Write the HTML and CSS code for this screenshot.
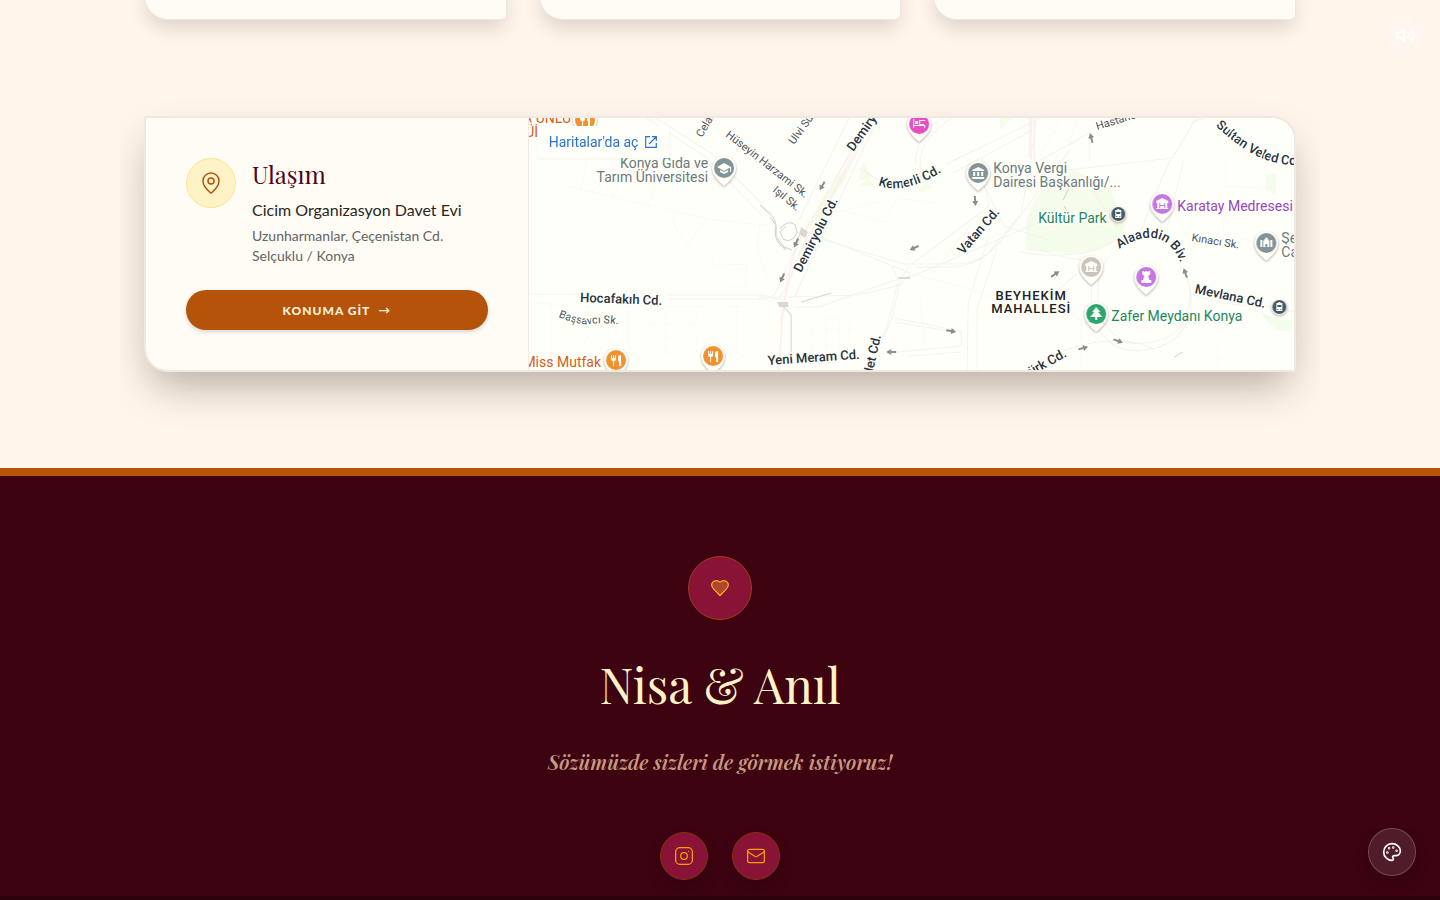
FILE: index.html
```
<!DOCTYPE html>
<html lang="tr">
<head>
    <meta charset="UTF-8">
    <meta name="viewport" content="width=device-width, initial-scale=1.0">
    <title>Nisa &amp; Anıl</title>
    <link rel="stylesheet" href="styles.css">
</head>
<body>
    <button class="sound-btn" type="button" aria-label="Müzik">
        <svg viewBox="0 0 24 24" width="20" height="20" class="icon">
            <path d="M11 5 6 9H2v6h4l5 4z"/>
            <path d="M15.54 8.46a5 5 0 0 1 0 7.07M19.07 4.93a10 10 0 0 1 0 14.14"/>
        </svg>
    </button>

    <main>
        <div class="cards">
            <div class="card"></div>
            <div class="card"></div>
            <div class="card"></div>
        </div>

        <section class="location">
            <div class="location-info">
                <div class="location-head">
                    <div class="pin-icon">
                        <svg viewBox="0 0 24 24" width="24" height="24" class="icon thin">
                            <path d="M20 10c0 5-5.540 10.190-7.400 11.800a1 1 0 0 1-1.200 0C9.540 20.190 4 15 4 10a8 8 0 0 1 16 0"/>
                            <circle cx="12" cy="10" r="3"/>
                        </svg>
                    </div>
                    <div>
                        <h3>Ulaşım</h3>
                        <p class="venue">Cicim Organizasyon Davet Evi</p>
                        <p class="address">Uzunharmanlar, Çeçenistan Cd.<br>Selçuklu / Konya</p>
                    </div>
                </div>
                <a class="location-btn" href="#konum">KONUMA GİT <span class="btn-arrow">→</span></a>
            </div>

            <div class="map">
                <svg class="map-canvas" viewBox="0 0 765 252" preserveAspectRatio="xMidYMid slice" role="img" aria-label="Konya haritası">
                    <defs>
                        <path id="pin" d="M0 18C-3 15-12 9-12 0a12 12 0 0 1 24 0c0 9-9 15-12 18z"/>
                        <path id="arrow" d="M-5-1H0V-3L5 0 0 3V1H-5z"/>
                        <path id="fork" d="M-5-5v4q0 2 2 2v5h1V1q2 0 2-2v-4h-1v3h-1v-3h-1v3h-1v-3zM2-4v5h1v5h2V-5q-2 0-3 1z"/>
                        <path id="museum" fill-rule="evenodd" d="M-6-3 0-6 6-3v2H5v5h1v1H-6V4h1v-5h-1zM-3-1v5h1V2h4v2h1v-5H2v2h-4v-2z"/>
                        <path id="p-kemerli" d="M349 67Q374 78 414 53"/>
                        <path id="p-alaaddin" d="M590 131Q626 107 646 134L652 146"/>
                        <path id="p-sultan" d="M686 8Q716 35 737 42T775 46"/>
                        <path id="p-bassavci" d="M29 199Q52 208 62 206T94 207"/>
                    </defs>

                    <g class="park">
                        <path d="M497 104Q503 80 523 62L543 52Q566 60 578 66L597 105 590 122Q568 133 545 136L497 132z"/>
                        <path d="M276 111 311 56 323 45 316 62 284 108zM334 45l7 10v7h-12zM330 67l10-6 5 8zM389 71l7-6 8 4-12 6zM471 0h12l-8 8-5 3zM736 56h11l-1 20-10-4zM730 193l18 8 14 1v11h-10q-12-4-22-20z"/>
                    </g>

                    <g class="road faint">
                        <path d="M38 68 80 78 145 93 180 101 245 108M58 42l-7 33M83 50 66 72M98 42 82 84M133 45l-15 48M144 98q2 18 15 28l20-27M183 139v9l34-2v23h-22M0 188h240M0 184l22 2v49M59 188v29l-5 14M98 188l2 45M119 194h48v12h-48zM120 220h48v14h-40M137 194v42M207 188v46l22 14M231 105l-3 25 10 30"/>
                        <path d="M282 200h28v45h-28zM297 200v45M282 212h45M282 228h40M320 204v40M285 100l70-18M300 90l60 15M355 102l13-22 40 5M376 154l65 17 50 20M440 108l-38 50M391 180l5 50"/>
                        <path d="M500 55l30-50M520 10l30 20M548 0l-12 40M640 86h50l8 20M660 90v40M690 68l5 50M696 40v28l50 3M695 118l50 8M600 225l30 27M552 252v-50l-30-18M660 180l-10 40M640 205h80M655 240h90M688 225v27M500 104l90 20M520 68l60 56M543 54l12 80M506 120 576 72M498 90l54 44"/>
                    </g>
                    <g class="road">
                        <path d="M0 176h52M138 177h95l20 5M140 181h97l9-5 28-63M117 0l58 38 57 58M127 0l56 36 60 60"/>
                        <path d="M320 0 265 112M343 0 302 77 250 182M347 4 328 44 265 180M229 179h30l70-2 42-10 10-12-102-41M265 189h25L372 160l14-3 120-51M330 50l22 14M417 46 512 0M424 55 500 14V0M391 60V42Q392 22 422 0M386 46q1-30 28-46"/>
                        <path d="M285 119l90 27h53q25-1 43-22l70-92M363 148l6 15-10 42-20 47M380 148l-8 12-10 43-23 49M387 149h33q31-1 44-20L492 96 505 18 507 0M448 40l12 48-77 58M453 40l2 28 20 40 44 14M459 120l-20 65-1 67M468 130l-20 60v62M365 200l67 13v15l-116 11M366 204l66 11M380 238l52-4"/>
                        <path d="M491 134q25 5 55 2 20 0 45-17M510 132l28 8 18 2M502 0v45M506 45 560 15M540 52q40-5 103-12L667 0M560 43V10M641 42l-10 22-20 50M654 43l-20 84M662 5 674 0"/>
                        <path d="M580 137q-20 30-5 67 15 25 40 21 38-3 44-35 6-22-8-43M570 142q-15 30-2 67 15 27 46 23 37-3 47-37 3-20-4-38M532 234q25-10 47-11 26-2 45 8M660 175q40 15 80 13l25 6M520 180l28-25"/>
                    </g>
                    <path class="rail" d="M322 34Q292 86 273 118T250 252M328 34 278 120Q255 164 252 205M502 0l-2 39M505 0v42M558 60l16 30 15 19"/>
                    <path class="lane" d="M231 87l13 12q4 6 2 13-1 12 11 20M241 99l6 8v12l8 10 8 3M251 111q8-10 15-4l2 7q-5 12-14 7l-3-7 6-6M273 112l-8 15M272 184l30-9M253 187l9 10v39M534 82l6-13M535 88l4 7M645 239l8-5"/>
                    <path class="station" d="M272 109l7 5-3 6-6-4zM248 184h11v5h-9zM369 159h12v2h-12z"/>
                    <g class="arrows">
                        <use href="#arrow" transform="translate(293 68) rotate(120)"/>
                        <use href="#arrow" transform="translate(267 125) rotate(115)"/>
                        <use href="#arrow" transform="translate(253 160) rotate(115)"/>
                        <use href="#arrow" transform="translate(446 83) rotate(85)"/>
                        <use href="#arrow" transform="translate(385 130) rotate(155)"/>
                        <use href="#arrow" transform="translate(422 213) rotate(10)"/>
                        <use href="#arrow" transform="translate(362 234) rotate(180)"/>
                        <use href="#arrow" transform="translate(562 20) rotate(-105)"/>
                        <use href="#arrow" transform="translate(526 156) rotate(-35)"/>
                        <use href="#arrow" transform="translate(656 155) rotate(-110)"/>
                        <use href="#arrow" transform="translate(589 223) rotate(20)"/>
                        <use href="#arrow" transform="translate(554 230) rotate(-15)"/>
                    </g>

                    <g class="street">
                        <text transform="translate(51 184) rotate(2)">Hocafakıh Cd.</text>
                        <text transform="translate(324 34) rotate(-54)">Demiry</text>
                        <text transform="translate(272 155) rotate(-63)">Demiryolu Cd.</text>
                        <text transform="translate(434 137) rotate(-49)">Vatan Cd.</text>
                        <text transform="translate(239 247) rotate(-4)">Yeni Meram Cd.</text>
                        <text transform="translate(344 254) rotate(-78)">let Cd.</text>
                        <text transform="translate(665 175) rotate(12)">Mevlana Cd.</text>
                        <text transform="translate(502 258) rotate(-29)">ürk Cd.</text>
                        <text><textPath href="#p-kemerli">Kemerli Cd.</textPath></text>
                        <text><textPath href="#p-alaaddin">Alaaddin Blv.</textPath></text>
                        <text><textPath href="#p-sultan">Sultan Veled Cd.</textPath></text>
                    </g>
                    <g class="street small">
                        <text transform="translate(173 20) rotate(-60)">Celal</text>
                        <text transform="translate(265 27) rotate(-54)">Ulvi Sultan</text>
                        <text transform="translate(196 18) rotate(38)">Hüseyin Harzami Sk.</text>
                        <text transform="translate(243 73) rotate(40)">Işıl Sk.</text>
                        <text transform="translate(568 12) rotate(-17)">Hastane</text>
                        <text transform="translate(662 123) rotate(9)">Kınacı Sk.</text>
                        <text><textPath href="#p-bassavci">Başsavcı Sk.</textPath></text>
                    </g>
                    <g class="district">
                        <text x="502" y="182" text-anchor="middle">BEYHEKİM</text>
                        <text x="502" y="195" text-anchor="middle">MAHALLESİ</text>
                    </g>

                    <g class="place">
                        <text class="food" x="42" y="5" text-anchor="end">A ÜNLÜ</text>
                        <text class="food" x="9" y="19" text-anchor="end">Üİ</text>
                        <text class="food" x="72" y="249" text-anchor="end">Miss Mutfak</text>
                        <text class="public" x="179" y="50" text-anchor="end">Konya Gıda ve</text>
                        <text class="public" x="179" y="64" text-anchor="end">Tarım Üniversitesi</text>
                        <text class="public" x="464" y="55">Konya Vergi</text>
                        <text class="public" x="464" y="69">Dairesi Başkanlığı/...</text>
                        <text class="public" x="752" y="125">Şeyh</text>
                        <text class="public" x="752" y="139">Camii</text>
                        <text class="green" x="509" y="105">Kültür Park</text>
                        <text class="green" x="582" y="203">Zafer Meydanı Konya</text>
                        <text class="museum" x="648" y="93">Karatay Medresesi</text>
                    </g>

                    <g class="pins">
                        <g transform="translate(56 2)"><use href="#pin"/><circle r="10" fill="#f29130"/><use class="glyph" href="#fork"/></g>
                        <g transform="translate(87 242)"><use href="#pin"/><circle r="10" fill="#f29130"/><use class="glyph" href="#fork"/></g>
                        <g transform="translate(184 238)"><use href="#pin"/><circle r="10" fill="#f29130"/><use class="glyph" href="#fork"/></g>
                        <g transform="translate(195 50)"><use href="#pin"/><circle r="10" fill="#839496"/><path class="glyph" d="M-7-1 0-5 7-1 0 3zM-4 2 0 4 4 2v2L0 6-4 4zM6-1h1v5H6z"/></g>
                        <g transform="translate(390 6)"><use href="#pin"/><circle r="10" fill="#e84fc2"/><path class="glyph" fill-rule="evenodd" d="M-6-5h1V1H5v-4h1V4H5V2H-5v2h-1zM-4-3h3v3h-3zM0-4h6v5H0zM1-3v3h4v-3z"/></g>
                        <g transform="translate(449 55)"><use href="#pin"/><circle r="10" fill="#839496"/><path class="glyph" d="M-6-3 0-6 6-3v1H-6zM-5-1h2v4h-2zM-1-1h2v4h-2zM3-1h2v4H3zM-6 4H6v2H-6z"/></g>
                        <g transform="translate(633 86)"><use href="#pin"/><circle r="10" fill="#c575e5"/><use class="glyph" href="#museum"/></g>
                        <g transform="translate(562 149)"><use href="#pin"/><circle r="10" fill="#cbc4b9"/><use class="glyph" href="#museum"/></g>
                        <g transform="translate(617 159)"><use href="#pin"/><circle r="10" fill="#c575e5"/><path class="glyph" d="M-4-6h2v1h1v-1h2v1h1v-1h2v3L2-1 3 3H5v3H-5V3h2l1-4-2-2z"/></g>
                        <g transform="translate(567 196)"><use href="#pin"/><circle r="10" fill="#2ca56e"/><path class="glyph" d="M0-7 4-2H2l4 5H1v3h-2V3h-5l4-5h-2z"/></g>
                        <g transform="translate(737 125)"><use href="#pin"/><circle r="10" fill="#839496"/><path class="glyph" d="M-6-3h2v7h-2zM4-3h2v7H4zM-3 4v-6L0-6l3 4v6H1V1h-2v3z"/></g>
                        <g transform="translate(589 96)"><circle r="8"/><circle r="7" fill="#455a68"/><path class="glyph" fill-rule="evenodd" d="M-3-4h2v-1h2v1h2v8h-6zM-2-2v2h4v-2zM-2 2v1h1V2zM1 2v1h1V2z"/></g>
                        <g transform="translate(750 189)"><circle r="8"/><circle r="7" fill="#455a68"/><path class="glyph" fill-rule="evenodd" d="M-3-4h2v-1h2v1h2v8h-6zM-2-2v2h4v-2zM-2 2v1h1V2zM1 2v1h1V2z"/></g>
                    </g>
                </svg>
                <a class="map-link" href="#harita">Haritalar'da aç
                    <svg viewBox="0 0 12 12" width="12" height="12"><path d="M5 .7H.7v10.600h10.600V7M7 .7h4.300V5M11 1 4 8"/></svg>
                </a>
            </div>
        </section>
    </main>

    <footer class="footer">
        <div class="heart">
            <svg viewBox="0 0 24 24" width="20" height="20" class="icon">
                <path d="M19 14c1.490-1.460 3-3.210 3-5.500A5.500 5.500 0 0 0 16.500 3c-1.760 0-3 .5-4.500 2-1.500-1.500-2.740-2-4.500-2A5.500 5.500 0 0 0 2 8.500c0 2.300 1.500 4.050 3 5.500l7 7z"/>
            </svg>
        </div>
        <h2>Nisa &amp; Anıl</h2>
        <p class="tagline">Sözümüzde sizleri de görmek istiyoruz!</p>
        <div class="socials">
            <a href="#instagram" aria-label="Instagram">
                <svg viewBox="0 0 24 24" width="20" height="20" class="icon thin">
                    <rect x="2" y="2" width="20" height="20" rx="5"/>
                    <circle cx="12" cy="12" r="4"/>
                    <path d="M17.500 6.500h.01"/>
                </svg>
            </a>
            <a href="#mail" aria-label="E-posta">
                <svg viewBox="0 0 24 24" width="20" height="20" class="icon thin">
                    <rect x="2" y="4" width="20" height="16" rx="2"/>
                    <path d="m22 7-8.970 5.700a2 2 0 0 1-2.060 0L2 7"/>
                </svg>
            </a>
        </div>
        <div class="footer-bottom"></div>
    </footer>

    <button class="theme-btn" type="button" aria-label="Tema">
        <svg viewBox="0 0 24 24" width="20" height="20" class="icon">
            <path d="M12 2C6.500 2 2 6.500 2 12s4.500 10 10 10c.93 0 1.650-.75 1.650-1.690 0-.44-.18-.83-.44-1.120-.29-.29-.44-.65-.44-1.130a1.640 1.640 0 0 1 1.670-1.670h2c3.050 0 5.550-2.500 5.550-5.550C21.970 6.010 17.460 2 12 2z"/>
            <circle cx="13.500" cy="6.500" r=".5"/>
            <circle cx="17.500" cy="10.500" r=".5"/>
            <circle cx="8.500" cy="7.500" r=".5"/>
            <circle cx="6.500" cy="12.500" r=".5"/>
        </svg>
    </button>
</body>
</html>
```
FILE: styles.css
```
* {
    box-sizing: border-box;
}

body {
    font-family: Lato, sans-serif;
    background-color: #fff5eb;
    color: #292524;
    margin: 0;
    overflow-x: hidden;
}

h2,
h3,
p {
    margin: 0;
}

h2,
h3,
.tagline {
    font-family: "Playfair Display", "Liberation Serif", serif;
    font-weight: 400;
}

.icon {
    fill: none;
    stroke: currentColor;
    stroke-width: 2;
    stroke-linecap: round;
    stroke-linejoin: round;
}

.thin {
    stroke-width: 1.5;
}

main {
    max-width: 1200px;
    margin: 0 auto;
    padding: 0 24px 96px;
    overflow: hidden;
}

/* bottom edge of the cards above */
.cards {
    display: grid;
    grid-template-columns: repeat(3, 1fr);
    gap: 32px;
    margin-top: -20px;
    margin-bottom: 96px;
}

.card {
    height: 40px;
    background-color: #fffcf6;
    border: 1px solid #efe6df;
    border-top: none;
    border-radius: 0 0 6px 24px;
    box-shadow: 0 10px 20px -4px rgba(40, 30, 23, 0.18);
}

.location {
    display: grid;
    grid-template-columns: 1fr 2fr;
    background-color: #fffcf6;
    border: 2px solid #f0e8e3;
    border-radius: 2px 24px 2px 24px;
    box-shadow: 0 20px 40px -8px rgba(40, 30, 18, 0.35);
}

.location-info {
    display: flex;
    flex-direction: column;
    gap: 24px;
    padding: 40px;
    border-right: 1px solid #f0e8e3;
}

.location-head {
    display: flex;
    gap: 16px;
}

.pin-icon {
    display: flex;
    align-items: center;
    justify-content: center;
    flex-shrink: 0;
    width: 50px;
    height: 50px;
    border: 1px solid #fde68a;
    border-radius: 50%;
    background-color: #fef3c7;
    color: #b45309;
}

h3 {
    font-size: 24px;
    line-height: 32px;
    margin-bottom: 8px;
    color: #4c0519;
}

.venue {
    font-size: 16px;
    line-height: 24px;
    margin-bottom: 4px;
}

.address {
    font-size: 14px;
    line-height: 20px;
    color: #66625f;
}

.location-btn {
    display: flex;
    align-items: center;
    justify-content: center;
    gap: 8px;
    height: 40px;
    border-radius: 20px;
    background-color: #b45309;
    color: #fdf0dc;
    font-size: 12px;
    font-weight: 900;
    letter-spacing: 1px;
    text-decoration: none;
    box-shadow: 0 2px 4px rgba(0, 0, 0, 0.15);
}

.btn-arrow {
    font-family: "DejaVu Sans", sans-serif;
    font-size: 14px;
    font-weight: 400;
}

.map {
    position: relative;
    overflow: hidden;
    min-height: 252px;
    border-radius: 0 22px 0 0;
    background-color: #fffffa;
}

.map-canvas {
    position: absolute;
    inset: 0;
    width: 100%;
    height: 100%;
    font-family: Roboto, sans-serif;
}

.map-link {
    position: absolute;
    top: 8px;
    left: 9px;
    display: flex;
    align-items: center;
    gap: 7px;
    height: 32px;
    padding: 0 12px 0 11px;
    background-color: #fffffa;
    box-shadow: 0 1px 2px rgba(120, 90, 60, 0.08);
    color: #2b72cf;
    font-family: Roboto, sans-serif;
    font-size: 14px;
    text-decoration: none;
}

.map-link svg {
    fill: none;
    stroke: currentColor;
    stroke-width: 1.2;
}

.park {
    fill: #f4fde9;
}

.road,
.rail,
.lane {
    fill: none;
    stroke: #f4f3eb;
    stroke-width: 1;
}

.faint {
    stroke: #fcf9f1;
}

.rail {
    stroke: #fcf2e9;
    stroke-width: 2;
}

.lane {
    stroke: #d5d4ce;
}

.station {
    fill: #dcd7d1;
}

.arrows {
    fill: #8b8d8c;
}

.street text {
    fill: #283341;
    font-size: 13px;
    font-weight: 500;
    paint-order: stroke;
    stroke: #fffffa;
    stroke-width: 3;
}

.small text {
    fill: #4b535b;
    font-size: 11px;
    font-weight: 400;
}

.district text {
    font-size: 13px;
    font-weight: 500;
    fill: #202124;
    letter-spacing: 1px;
}

.place text {
    font-size: 14px;
    paint-order: stroke;
    stroke: #fffffa;
    stroke-width: 3;
}

.place .food {
    fill: #d2601a;
}

.place .public {
    fill: #6c7a7b;
}

.place .green {
    fill: #22875a;
}

.place .museum {
    fill: #9547c1;
}

.pins {
    fill: #fffffa;
    filter: drop-shadow(0 1px 1px rgba(70, 40, 20, 0.4));
}

.pins .glyph {
    fill: #fffffa;
}

.footer {
    display: flex;
    flex-direction: column;
    align-items: center;
    padding-top: 80px;
    border-top: 8px solid #b45309;
    background-color: #3d0311;
    text-align: center;
}

.heart {
    display: flex;
    align-items: center;
    justify-content: center;
    width: 64px;
    height: 64px;
    margin-bottom: 32px;
    border: 1px solid #a13c16;
    border-radius: 50%;
    background-color: #881337;
    color: #fbb024;
}

.heart .icon {
    fill: #b0462a;
    stroke-width: 1.5;
}

h2 {
    font-size: 48px;
    line-height: 64px;
    margin-bottom: 30px;
    color: #fef3c7;
}

.tagline {
    font-size: 20px;
    line-height: 32px;
    margin-bottom: 54px;
    color: #c79a80;
    font-style: italic;
    font-weight: 600;
}

.socials {
    display: flex;
    gap: 24px;
    margin-bottom: 16px;
}

.socials a {
    display: flex;
    align-items: center;
    justify-content: center;
    width: 48px;
    height: 48px;
    border: 1px solid #84320f;
    border-radius: 50%;
    background-color: #881337;
    color: #f59e0b;
    box-shadow: 0 8px 16px rgba(0, 0, 0, 0.15);
}

.footer-bottom {
    align-self: stretch;
    height: 4px;
    background-color: #2e020d;
}

.sound-btn,
.theme-btn {
    position: fixed;
    right: 16px;
    z-index: 10;
    display: flex;
    align-items: center;
    justify-content: center;
    padding: 0;
    border: 1px solid rgba(255, 255, 255, 0.2);
    border-radius: 50%;
    background-color: rgba(255, 255, 255, 0.1);
    color: #fff;
    cursor: pointer;
}

.sound-btn {
    top: 16px;
    width: 38px;
    height: 38px;
    background-color: rgba(255, 255, 255, 0.2);
}

.theme-btn {
    right: 24px;
    bottom: 24px;
    width: 48px;
    height: 48px;
    box-shadow: 0 8px 16px rgba(0, 0, 0, 0.15);
}
```
